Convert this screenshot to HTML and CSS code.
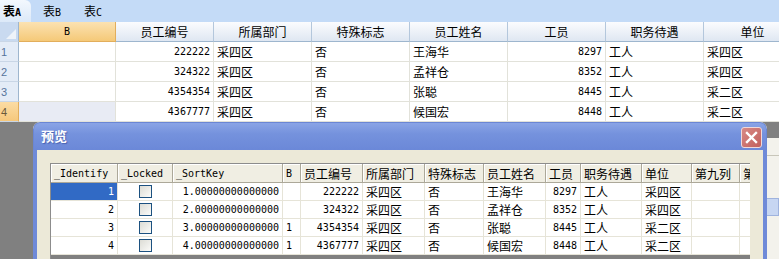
FILE: index.html
```html
<!DOCTYPE html>
<html lang="zh-CN">
<head>
    <meta charset="UTF-8">
    <title>预览</title>
    <link rel="stylesheet" href="styles.css">
</head>
<body>
<!-- sheet tabs -->
<div class="tabs">
    <div class="tab active">表<span class="m">A</span></div>
    <div class="tab">表<span class="m">B</span></div>
    <div class="tab">表<span class="m">C</span></div>
</div>

<!-- main sheet -->
<div class="sheet">
    <div class="srow shead">
        <div class="c rh corner"><span class="tri"></span></div>
        <div class="c cb sel m">B</div>
        <div class="c">员工编号</div>
        <div class="c">所属部门</div>
        <div class="c">特殊标志</div>
        <div class="c">员工姓名</div>
        <div class="c">工员</div>
        <div class="c">职务待遇</div>
        <div class="c">单位</div>
    </div>
    <div class="srow">
        <div class="c rh">1</div>
        <div class="c cb"></div>
        <div class="c r m">222222</div>
        <div class="c">采四区</div>
        <div class="c">否</div>
        <div class="c">王海华</div>
        <div class="c r m">8297</div>
        <div class="c">工人</div>
        <div class="c">采四区</div>
    </div>
    <div class="srow">
        <div class="c rh">2</div>
        <div class="c cb"></div>
        <div class="c r m">324322</div>
        <div class="c">采四区</div>
        <div class="c">否</div>
        <div class="c">孟祥仓</div>
        <div class="c r m">8352</div>
        <div class="c">工人</div>
        <div class="c">采四区</div>
    </div>
    <div class="srow">
        <div class="c rh">3</div>
        <div class="c cb"></div>
        <div class="c r m">4354354</div>
        <div class="c">采四区</div>
        <div class="c">否</div>
        <div class="c">张聪</div>
        <div class="c r m">8445</div>
        <div class="c">工人</div>
        <div class="c">采二区</div>
    </div>
    <div class="srow">
        <div class="c rh sel">4</div>
        <div class="c cb cur"></div>
        <div class="c r m">4367777</div>
        <div class="c">采四区</div>
        <div class="c">否</div>
        <div class="c">候国宏</div>
        <div class="c r m">8448</div>
        <div class="c">工人</div>
        <div class="c">采二区</div>
    </div>
</div>

<!-- window lying behind the dialog on the right -->
<div class="behind">
    <div class="behind-line"></div>
    <div class="behind-box"></div>
</div>

<!-- preview dialog -->
<div class="dialog">
    <div class="dlg-title">
        <span class="dlg-caption">预览</span>
        <div class="dlg-close">
            <svg width="13" height="13" viewBox="0 0 13 13">
                <path d="M2 2 L11 11 M11 2 L2 11" stroke="#fff" stroke-width="2.4" stroke-linecap="square"/>
            </svg>
        </div>
    </div>
    <div class="dlg-body">
        <div class="grid">
            <div class="grow ghead">
                <div class="g w1 m">_Identify</div>
                <div class="g w2 m">_Locked</div>
                <div class="g w3 m">_SortKey</div>
                <div class="g w4 m">B</div>
                <div class="g w5">员工编号</div>
                <div class="g w6">所属部门</div>
                <div class="g w7">特殊标志</div>
                <div class="g w8">员工姓名</div>
                <div class="g w9">工员</div>
                <div class="g w10">职务待遇</div>
                <div class="g w11">单位</div>
                <div class="g w12">第九列</div>
                <div class="g w13">第十列</div>
            </div>
            <div class="grow">
                <div class="g w1 r m picked">1</div>
                <div class="g w2 ctr"><span class="chk"></span></div>
                <div class="g w3 r m">1.00000000000000</div>
                <div class="g w4 m"></div>
                <div class="g w5 r m">222222</div>
                <div class="g w6">采四区</div>
                <div class="g w7">否</div>
                <div class="g w8">王海华</div>
                <div class="g w9 r m">8297</div>
                <div class="g w10">工人</div>
                <div class="g w11">采四区</div>
                <div class="g w12"></div>
                <div class="g w13"></div>
            </div>
            <div class="grow">
                <div class="g w1 r m">2</div>
                <div class="g w2 ctr"><span class="chk"></span></div>
                <div class="g w3 r m">2.00000000000000</div>
                <div class="g w4 m"></div>
                <div class="g w5 r m">324322</div>
                <div class="g w6">采四区</div>
                <div class="g w7">否</div>
                <div class="g w8">孟祥仓</div>
                <div class="g w9 r m">8352</div>
                <div class="g w10">工人</div>
                <div class="g w11">采四区</div>
                <div class="g w12"></div>
                <div class="g w13"></div>
            </div>
            <div class="grow">
                <div class="g w1 r m">3</div>
                <div class="g w2 ctr"><span class="chk"></span></div>
                <div class="g w3 r m">3.00000000000000</div>
                <div class="g w4 m">1</div>
                <div class="g w5 r m">4354354</div>
                <div class="g w6">采四区</div>
                <div class="g w7">否</div>
                <div class="g w8">张聪</div>
                <div class="g w9 r m">8445</div>
                <div class="g w10">工人</div>
                <div class="g w11">采二区</div>
                <div class="g w12"></div>
                <div class="g w13"></div>
            </div>
            <div class="grow">
                <div class="g w1 r m">4</div>
                <div class="g w2 ctr"><span class="chk"></span></div>
                <div class="g w3 r m">4.00000000000000</div>
                <div class="g w4 m">1</div>
                <div class="g w5 r m">4367777</div>
                <div class="g w6">采四区</div>
                <div class="g w7">否</div>
                <div class="g w8">候国宏</div>
                <div class="g w9 r m">8448</div>
                <div class="g w10">工人</div>
                <div class="g w11">采二区</div>
                <div class="g w12"></div>
                <div class="g w13"></div>
            </div>
        </div>
    </div>
</div>
</body>
</html>
```

FILE: styles.css
```css
* {
    box-sizing: border-box;
}
body {
    margin: 0;
    width: 779px;
    height: 259px;
    overflow: hidden;
    position: relative;
    background-color: #808080;
    font-family: "Noto Sans CJK SC", sans-serif;
    font-size: 12px;
    color: #000;
}
.m {
    font-family: "DejaVu Sans Mono", "Noto Sans CJK SC", monospace;
    font-size: 10px;
}

/* sheet tabs */
.tabs {
    height: 22px;
    display: flex;
    background-color: #c4dbf7;
}
.tab {
    width: 41px;
    padding-left: 12px;
    line-height: 21px;
    white-space: nowrap;
}
.tab.active {
    width: 31px;
    padding-left: 3px;
    font-weight: bold;
    background: linear-gradient(#f3f8fe, #dce9f8);
    border-top-right-radius: 6px;
}
.tab.active .m {
    font-weight: bold;
}

/* main sheet */
.sheet {
    background-color: #fff;
    width: 779px;
    overflow: hidden;
}
.srow {
    display: flex;
    height: 20px;
}
.c {
    flex: none;
    width: 98px;
    height: 20px;
    padding: 0 3px;
    border-right: 1px solid #e2e2da;
    border-bottom: 1px solid #e2e2da;
    display: flex;
    align-items: center;
    white-space: nowrap;
    overflow: hidden;
}
.c.r {
    justify-content: flex-end;
}
.c.cb {
    width: 97px;
}
.c.cur {
    background-color: #e8ebf4;
}
.shead .c {
    justify-content: center;
    background: linear-gradient(#fbfcfe, #dfe7f2);
    border-right: 1px solid #b4c7dc;
    border-bottom: 1px solid #9eb6ce;
}
.shead .c.sel {
    background: linear-gradient(#fbe2b2, #f5c978);
    border-right-color: #e2ae5c;
    border-bottom-color: #e2ae5c;
}
.c.rh {
    width: 19px;
    padding: 0 1px;
    color: #56749c;
    font-family: "Liberation Sans", sans-serif;
    font-size: 11px;
    background-color: #e4ecf7;
    border-right: 1px solid #9eb6ce;
    border-bottom: 1px solid #c9d6e6;
}
.c.rh.sel {
    background: linear-gradient(#fbdca4, #f6c87c);
    border-right-color: #e2ae5c;
    color: #6a5a3a;
}
.shead .c.corner {
    background: #c9daf0;
    position: relative;
}
.tri {
    position: absolute;
    right: 2px;
    bottom: 2px;
    width: 0;
    height: 0;
    border-left: 10px solid transparent;
    border-bottom: 10px solid #eef3f9;
}

/* window behind the dialog */
.behind {
    position: absolute;
    left: 764px;
    top: 138px;
    width: 15px;
    height: 121px;
    background-color: #f3f2ec;
}
.behind-line {
    margin-top: 17px;
    height: 1px;
    background-color: #c8c6ba;
}
.behind-box {
    margin-top: 42px;
    height: 18px;
    background-color: #c7d6f2;
    border: 1px solid #9fb3de;
}

/* preview dialog */
.dialog {
    position: absolute;
    left: 33px;
    top: 122px;
    width: 734px;
    height: 137px;
    background-color: #ece9d8;
    border-radius: 7px 7px 0 0;
    overflow: hidden;
}
.dlg-title {
    height: 28px;
    position: relative;
    background: linear-gradient(#8aa4e6, #7592dd 40%, #6b88d8);
    border: 1px solid #6a86d4;
    border-bottom: none;
    border-radius: 7px 7px 0 0;
}
.dlg-caption {
    position: absolute;
    left: 7px;
    top: 5px;
    color: #fff;
    font-weight: bold;
    font-size: 13px;
    line-height: 16px;
    text-shadow: 1px 1px 1px #4a62b0;
}
.dlg-close {
    position: absolute;
    left: 707px;
    top: 4px;
    width: 21px;
    height: 21px;
    border: 1px solid #f0d8d8;
    border-radius: 3px;
    background: linear-gradient(135deg, #d88a86, #c2605c);
    display: flex;
    align-items: center;
    justify-content: center;
}
.dlg-body {
    height: 109px;
    padding: 13px 13px 0 13px;
    border-left: 4px solid #6f8ad8;
    border-right: 4px solid #6f8ad8;
}

/* preview grid */
.grid {
    width: 700px;
    height: 96px;
    background-color: #808080;
    border-left: 1px solid #8c8c8c;
    border-top: 1px solid #8c8c8c;
    overflow: hidden;
}
.grow {
    display: flex;
    height: 18px;
}
.ghead {
    height: 19px;
}
.g {
    flex: none;
    height: 100%;
    padding: 0 3px;
    background-color: #fff;
    border-right: 1px solid #e6e4d8;
    border-bottom: 1px solid #e6e4d8;
    display: flex;
    align-items: center;
    white-space: nowrap;
    overflow: hidden;
}
.ghead .g {
    background-color: #f0eee3;
    border-right: 1px solid #aca899;
    border-bottom: 1px solid #aca899;
    box-shadow: inset 1px 1px #fff;
}
.g.r {
    justify-content: flex-end;
}
.g.ctr {
    justify-content: center;
}
.g.picked {
    background-color: #316ac5;
    color: #fff;
}
.chk {
    width: 13px;
    height: 13px;
    border: 1px solid #1c5180;
    background: linear-gradient(135deg, #dcdcd5, #fbfbf9);
}
.w1 { width: 67px; }
.w2 { width: 55px; }
.w3 { width: 110px; }
.w4 { width: 18px; }
.w5 { width: 62px; }
.w6 { width: 62px; }
.w7 { width: 59px; }
.w8 { width: 62px; }
.w9 { width: 35px; }
.w10 { width: 61px; }
.w11 { width: 50px; }
.w12 { width: 48px; }
.w13 { width: 60px; }
```
